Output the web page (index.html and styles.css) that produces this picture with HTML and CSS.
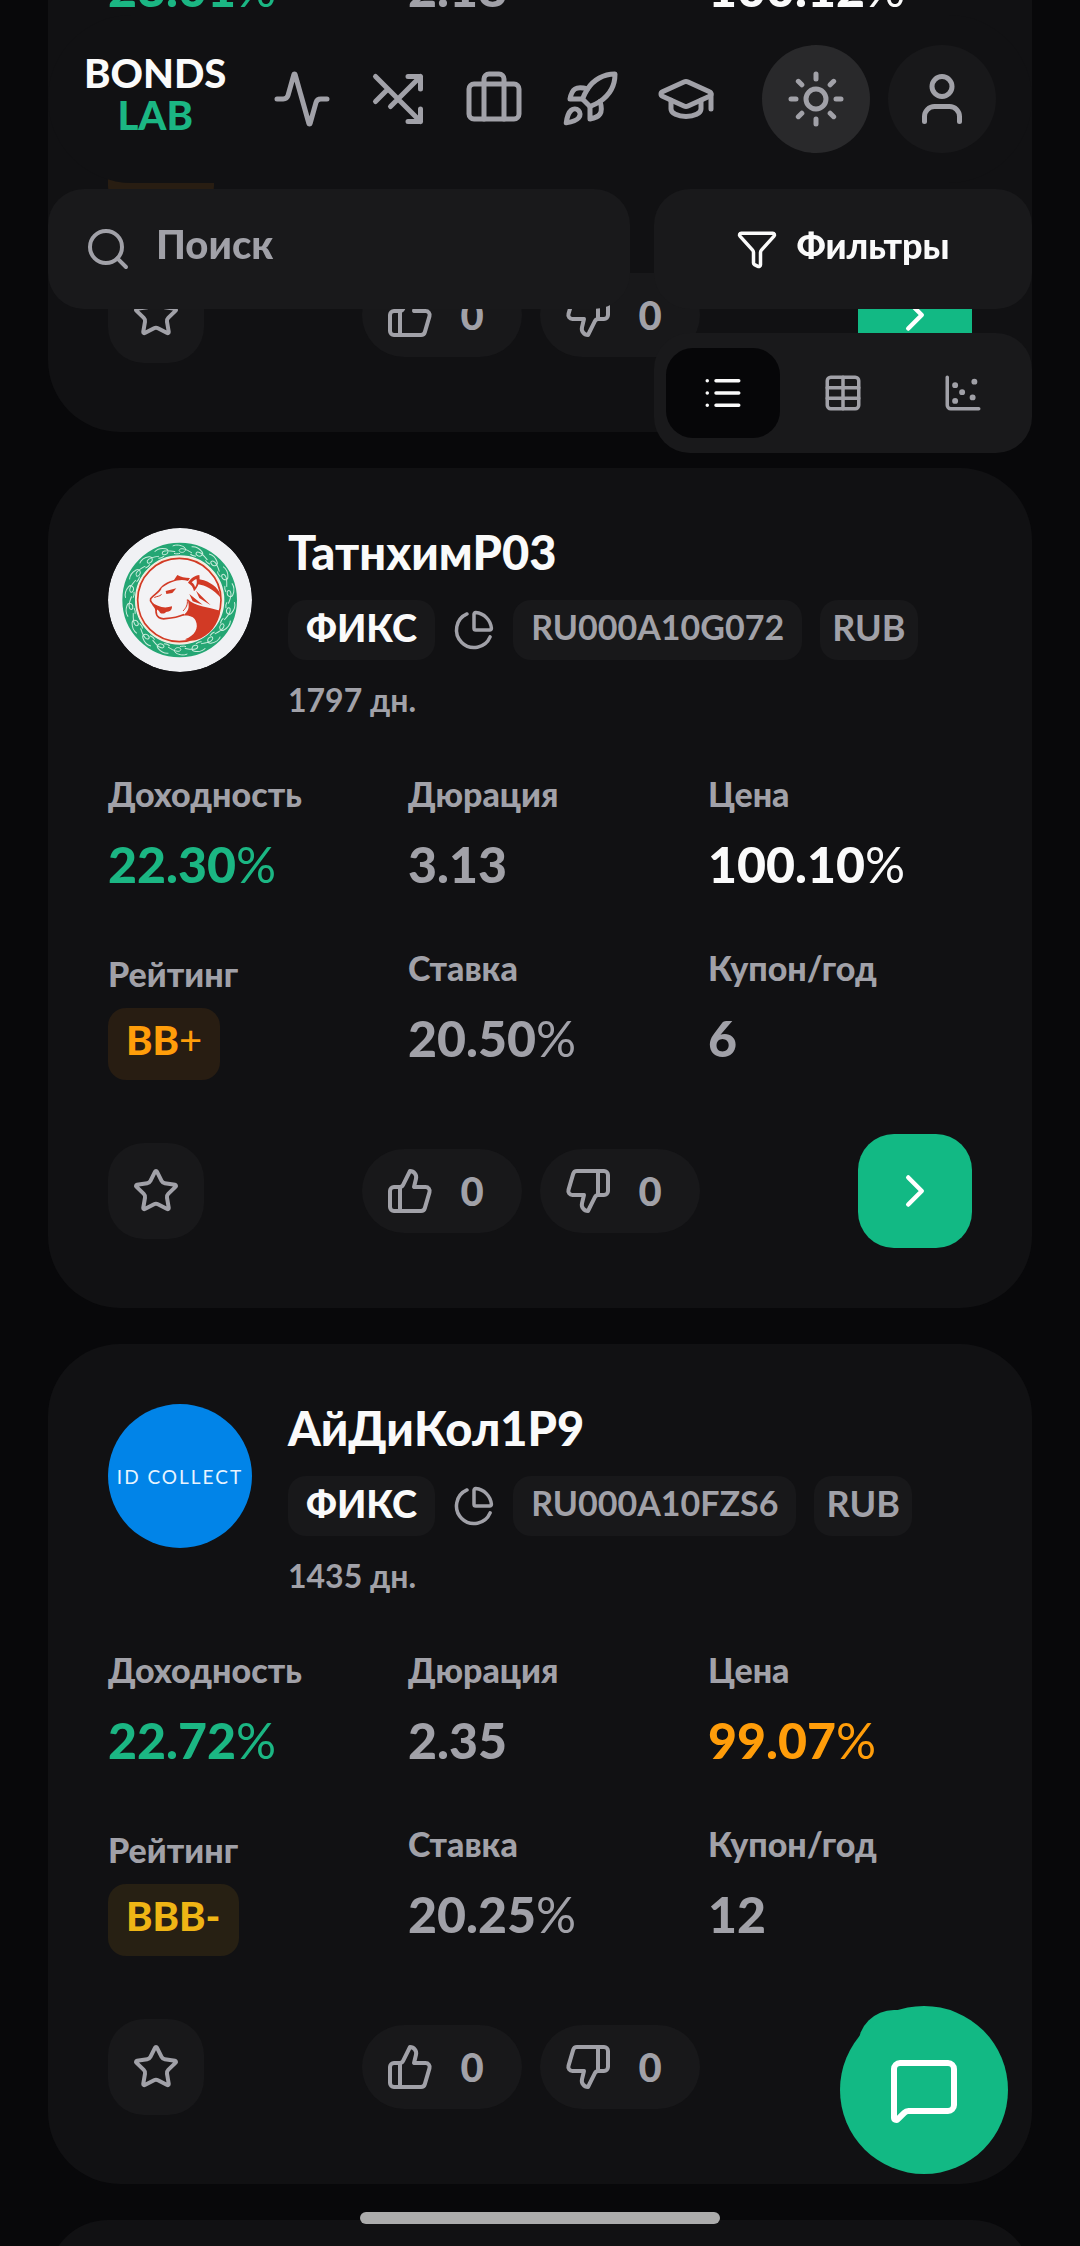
FILE: index.html
```html
<!DOCTYPE html>
<html lang="ru">
<head>
    <meta charset="utf-8">
    <meta name="viewport" content="width=device-width, initial-scale=1">
    <title>Bonds Lab</title>
    <link rel="stylesheet" href="styles.css">
</head>
<body>
    <!-- icon sprite -->
    <svg class="sprite" aria-hidden="true">
        <symbol id="activity" viewBox="0 0 24 24"><path d="M22 12h-2.48a2 2 0 0 0-1.93 1.46l-2.35 8.36a.25.25 0 0 1-.48 0L9.24 2.18a.25.25 0 0 0-.48 0l-2.35 8.36A2 2 0 0 1 4.49 12H2"/></symbol>
        <symbol id="shuffle" viewBox="0 0 24 24"><path d="M3 3l18 18M16 3h5v5M21 3L9 15M3 13l5-5M16 21h5v-5"/></symbol>
        <symbol id="briefcase" viewBox="0 0 24 24"><path d="M16 20V4a2 2 0 0 0-2-2h-4a2 2 0 0 0-2 2v16"/><rect x="2" y="6" width="20" height="14" rx="2"/></symbol>
        <symbol id="rocket" viewBox="0 0 24 24"><path d="M4.5 16.5c-1.5 1.26-2 5-2 5s3.74-.5 5-2c.71-.84.7-2.13-.09-2.91a2.18 2.18 0 0 0-2.91-.09z"/><path d="m12 15-3-3a22 22 0 0 1 2-3.95A12.88 12.88 0 0 1 22 2c0 2.72-.78 7.5-6 11a22.35 22.35 0 0 1-4 2z"/><path d="M9 12H4s.55-3.03 2-4c1.62-1.08 5 0 5 0M12 15v5s3.03-.55 4-2c1.08-1.62 0-5 0-5"/></symbol>
        <symbol id="cap" viewBox="0 0 24 24"><path d="M21.42 10.922a1 1 0 0 0-.019-1.838L12.83 5.18a2 2 0 0 0-1.66 0L2.6 9.08a1 1 0 0 0 0 1.832l8.57 3.908a2 2 0 0 0 1.66 0z"/><path d="M22 10v6M6 12.5V16a6 3 0 0 0 12 0v-3.5"/></symbol>
        <symbol id="sun" viewBox="0 0 24 24"><circle cx="12" cy="12" r="4"/><path d="M12 2v2M12 20v2M4.93 4.93l1.41 1.41M17.66 17.66l1.41 1.41M2 12h2M20 12h2M6.34 17.66l-1.41 1.41M19.07 4.93l-1.41 1.41"/></symbol>
        <symbol id="user" viewBox="0 0 24 24"><path d="M19 21v-2a4 4 0 0 0-4-4H9a4 4 0 0 0-4 4v2"/><circle cx="12" cy="7" r="4"/></symbol>
        <symbol id="search" viewBox="0 0 24 24"><circle cx="11" cy="11" r="8"/><path d="m21 21-4.34-4.34"/></symbol>
        <symbol id="funnel" viewBox="0 0 24 24"><path d="M10 20a1 1 0 0 0 .553.895l2 1A1 1 0 0 0 14 21v-7a2 2 0 0 1 .517-1.341L21.74 4.67A1 1 0 0 0 21 3H3a1 1 0 0 0-.742 1.67l7.225 7.989A2 2 0 0 1 10 14z"/></symbol>
        <symbol id="list" viewBox="0 0 24 24"><path d="M3 5h.01M3 12h.01M3 19h.01M8 5h13M8 12h13M8 19h13"/></symbol>
        <symbol id="table" viewBox="0 0 24 24"><path d="M12 3v18M3 9h18M3 15h18"/><rect x="3" y="3" width="18" height="18" rx="2"/></symbol>
        <symbol id="scatter" viewBox="0 0 24 24"><g fill="currentColor"><circle cx="7.5" cy="7.5" r=".7"/><circle cx="18.5" cy="5.5" r=".7"/><circle cx="11.5" cy="11.5" r=".7"/><circle cx="7.5" cy="16.5" r=".7"/><circle cx="17.5" cy="14.5" r=".7"/></g><path d="M3 3v16a2 2 0 0 0 2 2h16"/></symbol>
        <symbol id="pie" viewBox="0 0 24 24"><path d="M21 12c.552 0 1.005-.449.95-.998a10 10 0 0 0-8.953-8.951c-.55-.055-.998.398-.998.95v8a1 1 0 0 0 1 1z"/><path d="M21.21 15.89A10 10 0 1 1 8 2.83"/></symbol>
        <symbol id="star" viewBox="0 0 24 24"><path d="M11.525 2.295a.53.53 0 0 1 .95 0l2.31 4.679a2.123 2.123 0 0 0 1.595 1.16l5.166.756a.53.53 0 0 1 .294.904l-3.736 3.638a2.123 2.123 0 0 0-.611 1.878l.882 5.14a.53.53 0 0 1-.771.56l-4.618-2.428a2.122 2.122 0 0 0-1.973 0L6.396 21.01a.53.53 0 0 1-.77-.56l.881-5.139a2.122 2.122 0 0 0-.611-1.879L2.16 9.795a.53.53 0 0 1 .294-.906l5.165-.755a2.122 2.122 0 0 0 1.597-1.16z"/></symbol>
        <symbol id="up" viewBox="0 0 24 24"><path d="M7 10v12M15 5.88 14 10h5.83a2 2 0 0 1 1.92 2.56l-2.33 8A2 2 0 0 1 17.5 22H4a2 2 0 0 1-2-2v-8a2 2 0 0 1 2-2h2.76a2 2 0 0 0 1.79-1.11L12 2a3.13 3.13 0 0 1 3 3.88Z"/></symbol>
        <symbol id="down" viewBox="0 0 24 24"><path d="M17 14V2M9 18.12 10 14H4.17a2 2 0 0 1-1.92-2.56l2.33-8A2 2 0 0 1 6.5 2H20a2 2 0 0 1 2 2v8a2 2 0 0 1-2 2h-2.76a2 2 0 0 0-1.79 1.11L12 22a3.13 3.13 0 0 1-3-3.88Z"/></symbol>
        <symbol id="chevron" viewBox="0 0 24 24"><path d="m9 18 6-6-6-6"/></symbol>
        <symbol id="message" viewBox="0 0 24 24"><path d="M22 17a2 2 0 0 1-2 2H6.828a2 2 0 0 0-1.414.586l-2.202 2.202A.71.71 0 0 1 2 21.286V5a2 2 0 0 1 2-2h16a2 2 0 0 1 2 2z"/></symbol>
    </svg>

    <div class="top">
        <header class="header">
            <a class="logo" href="#">BONDS<span class="logo-lab">LAB</span></a>
            <nav class="nav">
                <a href="#" aria-label="Рынок"><svg class="icon icon-lg"><use href="#activity"/></svg></a>
                <a href="#" aria-label="Подбор"><svg class="icon icon-lg"><use href="#shuffle"/></svg></a>
                <a href="#" aria-label="Портфель"><svg class="icon icon-lg"><use href="#briefcase"/></svg></a>
                <a href="#" aria-label="Размещения"><svg class="icon icon-lg"><use href="#rocket"/></svg></a>
                <a href="#" aria-label="Обучение"><svg class="icon icon-lg"><use href="#cap"/></svg></a>
            </nav>
            <div class="header-buttons">
                <button class="round-btn active" type="button" aria-label="Тема"><svg class="icon icon-lg"><use href="#sun"/></svg></button>
                <button class="round-btn" type="button" aria-label="Профиль"><svg class="icon icon-lg"><use href="#user"/></svg></button>
            </div>
        </header>
        <div class="toolbar">
            <label class="search">
                <svg class="icon icon-md"><use href="#search"/></svg>
                <input class="search-input" type="search" placeholder="Поиск" aria-label="Поиск">
            </label>
            <button class="filters" type="button"><svg class="icon icon-sm"><use href="#funnel"/></svg><span class="filters-text">Фильтры</span></button>
            <div class="views">
                <button class="view active" type="button" aria-label="Список"><svg class="icon icon-sm"><use href="#list"/></svg></button>
                <button class="view" type="button" aria-label="Таблица"><svg class="icon icon-sm"><use href="#table"/></svg></button>
                <button class="view" type="button" aria-label="График"><svg class="icon icon-sm"><use href="#scatter"/></svg></button>
            </div>
        </div>
    </div>

    <main class="list">
        <article class="card">
            <dl class="stats">
                <div><dd class="green">23.01<span class="thin">%</span></dd></div>
                <div><dd>2.18</dd></div>
                <div><dd class="white">100.12<span class="thin">%</span></dd></div>
                <div class="rating"><dt>&nbsp;</dt><dd class="grade grade-empty orange">&nbsp;</dd></div>
            </dl>
            <div class="actions">
                <button class="fav" type="button" aria-label="В избранное"><svg class="icon icon-md"><use href="#star"/></svg></button>
                <div class="votes">
                    <button class="vote" type="button"><svg class="icon icon-md"><use href="#up"/></svg><span class="count">0</span></button>
                    <button class="vote" type="button"><svg class="icon icon-md"><use href="#down"/></svg><span class="count">0</span></button>
                </div>
                <a class="open" href="#" aria-label="Открыть"><svg class="icon icon-open"><use href="#chevron"/></svg></a>
            </div>
        </article>

        <article class="card">
            <div class="card-head">
                <svg class="avatar" viewBox="24 24 432 432" aria-hidden="true">
                    <defs>
                        <path id="knot" d="M218 78c10-5 24-3 34 3s2 18-8 16-8-11 2-11 22 8 30 13M222 100c4 2 12 2 18 0" />
                        <g id="knots"><use href="#knot"/><use href="#knot" transform="rotate(20 240 240)"/><use href="#knot" transform="rotate(40 240 240)"/></g>
                    </defs>
                    <circle cx="240" cy="240" r="216" fill="#f0f1f4"/>
                    <circle cx="239" cy="240" r="153" fill="none" stroke="#24a673" stroke-width="38"/>
                    <g fill="none" stroke="#c8ebdb" stroke-width="3">
                        <use href="#knots"/>
                        <use href="#knots" transform="rotate(60 240 240)"/>
                        <use href="#knots" transform="rotate(120 240 240)"/>
                        <use href="#knots" transform="rotate(180 240 240)"/>
                        <use href="#knots" transform="rotate(240 240 240)"/>
                        <use href="#knots" transform="rotate(300 240 240)"/>
                    </g>
                    <circle cx="238" cy="240" r="132" fill="#f4ecd8"/>
                    <circle cx="238" cy="240" r="125" fill="#f3f3f5" stroke="#d23a25" stroke-width="5"/>
                    <g fill="#d23a25">
                        <path d="M262 236c24 24 60 24 99 36-4 38-32 76-72 88-14 3-26 1-34-2 30-12 42-34 32-56-7-14-22-17-40-15 18-10 24-26 15-51z"/>
                        <path d="M290 176c30 4 56 18 68 40l3 16c-22-24-42-36-70-40z"/>
                        <path d="M268 222l40 32-30-10zM288 212l44 44-34-22z"/>
                        <path d="M155 247c16 12 36 20 61 12 0 12-6 16-18 17-4 6-14 6-18 2-2-6-6-8-12-12z"/>
                        <path d="M197 213l32-8-12 14-18 3z"/>
                        <path d="M222 180l10-15c10 6 22 9 38 9l-6 9c-22-7-50-2-86 26 6-14 24-24 44-29z"/>
                        <path fill-rule="evenodd" d="M264 188c10-14 20-21 34-23 3 18-2 34-16 49-2-12-8-20-18-26zm11-1c6 4 9 9 10 15 6-9 7-17 5-25-6 2-10 5-15 10z"/>
                    </g>
                    <g fill="none" stroke="#d23a25" stroke-width="5" stroke-linecap="round">
                        <path d="M182 206c-6 12-24 20-30 30-3 8 3 10 6 16 6 10 14 14 10 22 0 18 14 24 28 22 20-2 36-4 54-12"/>
                        <path d="M164 232c8-4 14-2 20-8" stroke-width="3"/>
                        <path d="M262 240c2 14-4 24-12 32" stroke-width="3"/>
                    </g>
                </svg>
                <div class="info">
                    <h2 class="name">ТатнхимР03</h2>
                    <div class="tags">
                        <span class="tag tag-type">ФИКС</span>
                        <svg class="icon icon-sm"><use href="#pie"/></svg>
                        <span class="tag">RU000A10G072</span>
                        <span class="tag tag-cur">RUB</span>
                    </div>
                    <p class="days">1797 дн.</p>
                </div>
            </div>
            <dl class="stats">
                <div><dt>Доходность</dt><dd class="green">22.30<span class="thin">%</span></dd></div>
                <div><dt>Дюрация</dt><dd>3.13</dd></div>
                <div><dt>Цена</dt><dd class="white">100.10<span class="thin">%</span></dd></div>
                <div class="rating"><dt>Рейтинг</dt><dd class="grade orange">BB<span class="thin">+</span></dd></div>
                <div><dt>Ставка</dt><dd>20.50<span class="thin">%</span></dd></div>
                <div><dt>Купон/год</dt><dd>6</dd></div>
            </dl>
            <div class="actions">
                <button class="fav" type="button" aria-label="В избранное"><svg class="icon icon-md"><use href="#star"/></svg></button>
                <div class="votes">
                    <button class="vote" type="button"><svg class="icon icon-md"><use href="#up"/></svg><span class="count">0</span></button>
                    <button class="vote" type="button"><svg class="icon icon-md"><use href="#down"/></svg><span class="count">0</span></button>
                </div>
                <a class="open" href="#" aria-label="Открыть"><svg class="icon icon-open"><use href="#chevron"/></svg></a>
            </div>
        </article>

        <article class="card">
            <div class="card-head">
                <div class="avatar avatar-id">ID COLLECT</div>
                <div class="info">
                    <h2 class="name">АйДиКол1Р9</h2>
                    <div class="tags">
                        <span class="tag tag-type">ФИКС</span>
                        <svg class="icon icon-sm"><use href="#pie"/></svg>
                        <span class="tag">RU000A10FZS6</span>
                        <span class="tag tag-cur">RUB</span>
                    </div>
                    <p class="days">1435 дн.</p>
                </div>
            </div>
            <dl class="stats">
                <div><dt>Доходность</dt><dd class="green">22.72<span class="thin">%</span></dd></div>
                <div><dt>Дюрация</dt><dd>2.35</dd></div>
                <div><dt>Цена</dt><dd class="orange">99.07<span class="thin">%</span></dd></div>
                <div class="rating"><dt>Рейтинг</dt><dd class="grade yellow">BBB-</dd></div>
                <div><dt>Ставка</dt><dd>20.25<span class="thin">%</span></dd></div>
                <div><dt>Купон/год</dt><dd>12</dd></div>
            </dl>
            <div class="actions">
                <button class="fav" type="button" aria-label="В избранное"><svg class="icon icon-md"><use href="#star"/></svg></button>
                <div class="votes">
                    <button class="vote" type="button"><svg class="icon icon-md"><use href="#up"/></svg><span class="count">0</span></button>
                    <button class="vote" type="button"><svg class="icon icon-md"><use href="#down"/></svg><span class="count">0</span></button>
                </div>
                <a class="open" href="#" aria-label="Открыть"><svg class="icon icon-open"><use href="#chevron"/></svg></a>
            </div>
        </article>

        <article class="card"></article>
    </main>

    <button class="chat" type="button" aria-label="Чат"><svg class="icon icon-chat"><use href="#message"/></svg></button>
    <div class="home-bar"></div>
</body>
</html>
```

FILE: styles.css
```css
* {
    box-sizing: border-box;
    margin: 0;
    padding: 0;
}
body {
    background: #08080a;
    color: #a1a1a8;
    font-family: Lato, "Noto Sans", sans-serif;
    font-size: 34px;
    font-weight: 700;
    height: 100vh;
    overflow: hidden;
}
a {
    color: inherit;
    text-decoration: none;
}
button, input {
    background: none;
    border: none;
    color: inherit;
    font: inherit;
}
button {
    cursor: pointer;
}
.sprite {
    display: none;
}

/* icons */
.icon {
    display: block;
    flex: none;
    fill: none;
    stroke: currentColor;
    stroke-width: 2;
    stroke-linecap: round;
    stroke-linejoin: round;
}
.icon-sm {
    width: 42px;
    height: 42px;
}
.icon-md {
    width: 48px;
    height: 48px;
}
.icon-open {
    width: 54px;
    height: 54px;
}
.icon-lg {
    width: 60px;
    height: 60px;
}
.icon-chat {
    width: 72px;
    height: 72px;
}

/* header */
.top {
    position: fixed;
    top: 15px;
    left: 48px;
    right: 48px;
    z-index: 10;
}
.header {
    display: flex;
    align-items: center;
    justify-content: space-between;
    height: 168px;
    padding: 0 36px;
    border-radius: 84px;
    background: #111113;
}
.logo {
    padding-bottom: 10px;
    color: #fafafa;
    font-size: 40px;
    font-weight: 900;
    line-height: 42px;
    text-align: center;
}
.logo-lab {
    display: block;
    color: #1bb683;
}
.nav {
    display: flex;
    gap: 36px;
}
.header-buttons {
    display: flex;
    gap: 18px;
}
.round-btn {
    display: flex;
    align-items: center;
    justify-content: center;
    width: 108px;
    height: 108px;
    border-radius: 50%;
    background: #18181a;
}
.round-btn.active {
    background: #29292b;
}

/* search and filters */
.toolbar {
    display: grid;
    grid-template-columns: 1fr 378px;
    gap: 24px;
    margin-top: 6px;
}
.search, .filters, .views {
    display: flex;
    align-items: center;
    height: 120px;
    border-radius: 36px;
    background: #19191b;
}
.search {
    gap: 24px;
    padding: 0 36px;
}
.search-input {
    width: 100%;
    padding-bottom: 10px;
    font-size: 40px;
    font-weight: 900;
    outline: none;
}
.search-input::placeholder {
    color: #a1a1a8;
}
.filters {
    justify-content: center;
    gap: 18px;
    color: #fafafa;
    font-size: 36px;
    font-weight: 900;
}
.filters-text {
    padding-bottom: 8px;
}
.views {
    grid-column: 2;
    gap: 6px;
    padding: 0 12px;
}
.view {
    display: flex;
    flex: 1;
    align-items: center;
    justify-content: center;
    height: 90px;
    border-radius: 27px;
}
.view.active {
    background: #060608;
    color: #fafafa;
}

/* cards, the list is scrolled part way into the first one */
.list {
    display: flex;
    flex-direction: column;
    gap: 36px;
    margin: -102px 48px 0;
}
.card {
    padding: 60px;
    border-radius: 72px;
    background: #111113;
}
.card-head {
    display: flex;
    gap: 36px;
    margin-bottom: 48px;
}
.avatar {
    flex: none;
    width: 144px;
    height: 144px;
    border-radius: 50%;
}
.avatar-id {
    display: flex;
    align-items: center;
    justify-content: center;
    background: #0184e8;
    color: #e8f4ff;
    font-size: 19px;
    font-weight: 400;
    letter-spacing: 2px;
    white-space: nowrap;
}
.name {
    margin-bottom: 24px;
    color: #fafafa;
    font-size: 47px;
    font-weight: 900;
    line-height: 48px;
}
.tags {
    display: flex;
    align-items: center;
    gap: 18px;
    margin-bottom: 18px;
}
.tag {
    padding: 3px 18px 9px;
    border-radius: 18px;
    background: #18181a;
    line-height: 48px;
}
.tag-type {
    color: #fafafa;
    font-size: 38px;
    font-weight: 900;
}
.tag-cur {
    padding: 3px 12px 9px;
    font-size: 36px;
}
.days {
    font-size: 32px;
    line-height: 44px;
}
.stats {
    display: grid;
    grid-template-columns: repeat(3, 1fr);
    gap: 50px 36px;
    margin-bottom: 54px;
}
.stats dt {
    margin-bottom: 16px;
    font-weight: 900;
    line-height: 48px;
}
.stats dd {
    font-size: 50px;
    font-weight: 900;
    line-height: 60px;
}
.stats .thin {
    font-weight: 400;
}
.rating {
    padding-top: 6px;
}
.rating dt {
    margin-bottom: 10px;
}
.stats .grade {
    width: fit-content;
    padding: 2px 18px 10px;
    border-radius: 18px;
    font-size: 40px;
}
.stats .grade-empty {
    width: 106px;
}
.green {
    color: #1bb683;
}
.white {
    color: #fafafa;
}
.orange {
    color: #ff9d0a;
}
.yellow {
    color: #efb515;
}
.grade.orange {
    background: #281d12;
}
.grade.yellow {
    background: #272013;
}
.actions {
    display: flex;
    align-items: center;
    justify-content: space-between;
}
.fav {
    display: flex;
    align-items: center;
    justify-content: center;
    width: 96px;
    height: 96px;
    border-radius: 36px;
    background: #18181a;
}
.votes {
    display: flex;
    gap: 18px;
}
.vote {
    display: flex;
    align-items: center;
    gap: 12px;
    height: 84px;
    padding: 0 24px;
    border-radius: 42px;
    background: #18181a;
}
.count {
    width: 52px;
    font-size: 40px;
    font-weight: 900;
    text-align: center;
}
.open {
    display: flex;
    align-items: center;
    justify-content: center;
    width: 114px;
    height: 114px;
    border-radius: 36px;
    background: #12b984;
    color: #fff;
}

/* floating */
.chat {
    position: fixed;
    right: 72px;
    bottom: 72px;
    display: flex;
    align-items: center;
    justify-content: center;
    width: 168px;
    height: 168px;
    border-radius: 50%;
    background: #12b984;
    color: #fff;
}
.home-bar {
    position: fixed;
    bottom: 22px;
    left: 0;
    right: 0;
    width: 360px;
    height: 12px;
    margin: 0 auto;
    border-radius: 6px;
    background: #acacac;
}
```
